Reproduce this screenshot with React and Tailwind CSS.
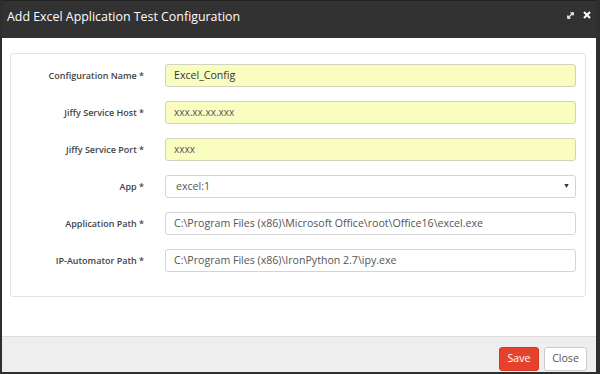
const fields = [
  { label: 'Configuration Name *', value: 'Excel_Config', yellow: true, dark: true },
  { label: 'Jiffy Service Host *', value: 'xxx.xx.xx.xxx', yellow: true, small: true },
  { label: 'Jiffy Service Port *', value: 'xxxx', yellow: true, small: true },
  { label: 'App *', value: 'excel:1', select: true },
  { label: 'Application Path *', value: 'C:\\Program Files (x86)\\Microsoft Office\\root\\Office16\\excel.exe' },
  { label: 'IP-Automator Path *', value: 'C:\\Program Files (x86)\\IronPython 2.7\\ipy.exe' },
];

const App = () => {
  return (
    <div
      className="w-[600px] h-[374px] flex flex-col bg-white border-l-2 border-r-4 border-b-2 border-[#2e2e2e] overflow-hidden"
      style={{ fontFamily: '"Open Sans", "Noto Sans", sans-serif' }}
    >
      {/* Header */}
      <div className="h-[38px] shrink-0 bg-[#323232] border-t border-[#222] flex items-start justify-between pl-[5px] pr-[5px] pt-[9px]">
        <h1 className="text-white text-[12.4px] leading-[14px]">Add Excel Application Test Configuration</h1>
        <div className="flex items-center gap-[9px] mt-[1px]">
          <svg width="7" height="7" viewBox="0 0 8 8" fill="none" stroke="white" strokeWidth="1.5">
            <path d="M1 7L7 1" />
            <path d="M4 1H7V4" />
            <path d="M1 4V7H4" />
          </svg>
          <svg width="8" height="8" viewBox="0 0 8 8" fill="none" stroke="white" strokeWidth="2">
            <path d="M1 1L7 7M7 1L1 7" />
          </svg>
        </div>
      </div>

      {/* Body */}
      <div className="flex-1 pt-[15px] pl-[8px] pr-[10px]">
        <div className="h-[244px] border border-[#e4e4e4] rounded-[3px] pt-[10px] pr-[9px] flex flex-col gap-[14px]">
          {fields.map((f) => (
            <div key={f.label} className="flex items-center h-[23px]">
              <label className="w-[133px] shrink-0 text-right text-[9px] font-semibold text-[#444]">{f.label}</label>
              <div
                className={`ml-[21px] flex-1 h-[23px] flex items-center justify-between rounded-[3px] border pl-[8px] pr-[5px] ${
                  f.yellow ? 'bg-[#fafdc0] border-[#d2d2c0]' : 'bg-white border-[#d5d5d5]'
                }`}
              >
                <span
                  className={`${f.small ? 'text-[10px]' : 'text-[10.6px]'} ${f.dark ? 'text-[#333]' : 'text-[#555]'} ${
                    f.select ? 'pl-[2px]' : ''
                  } whitespace-nowrap`}
                >
                  {f.value}
                </span>
                {f.select && <span className="text-[7px] text-[#333]">▼</span>}
              </div>
            </div>
          ))}
        </div>
      </div>

      {/* Footer */}
      <div className="h-[36px] shrink-0 bg-[#eeeeee] border-t border-[#dddddd] flex items-center justify-end gap-[5px] pr-[9px] pt-[8px]">
        <button className="h-[24px] w-[40px] rounded-[3px] bg-[#e5412d] border border-[#d33a27] text-white text-[10.6px]">
          Save
        </button>
        <button className="h-[24px] w-[43px] rounded-[3px] bg-white border border-[#cccccc] text-[#555] text-[10.6px]">
          Close
        </button>
      </div>
    </div>
  );
};

export default App;
